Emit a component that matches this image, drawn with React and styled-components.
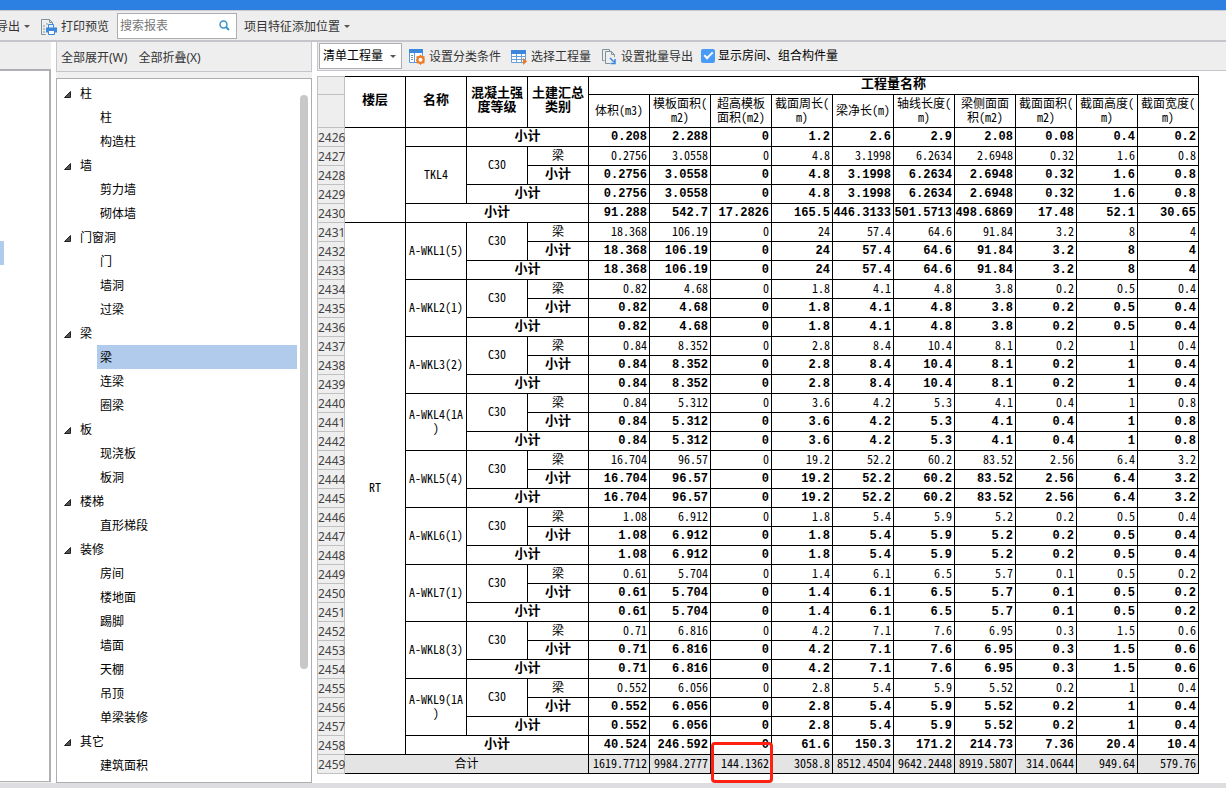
import React from "react";
import styled, { createGlobalStyle } from "styled-components";

const ui = `"Noto Sans", "Noto Sans CJK SC", sans-serif`;
const thin = `"Noto Sans CJK SC", monospace`;
const heavy = `"Liberation Mono", "Noto Sans CJK SC", monospace`;

const Global = createGlobalStyle`
  *, *::before, *::after { box-sizing: border-box; }
  body { margin: 0; background: #dedee0; font: 12px/16px ${ui}; color: #000; }
  button, input, select { font: inherit; color: inherit; }
`;

const Page = styled.div`
  min-height: 100vh;
  display: flex;
  flex-direction: column;
  padding-bottom: 5px;
  overflow: hidden;
`;
const TitleStrip = styled.div`
  height: 10px;
  background: #2b80e2;
`;
const TopBar = styled.header`
  display: flex;
  align-items: center;
  height: 32px;
  background: #eee;
  border-top: 1px solid #c8cad0;
  border-bottom: 2px solid #c4c6cc;
  color: #333;
`;
const ToolButton = styled.button`
  display: inline-flex;
  align-items: center;
  gap: 4px;
  padding: 2px 0 0;
  margin-left: ${(p) => p.$gap || 0}px;
  border: 0;
  background: none;
  white-space: nowrap;
  color: #333;
`;
const ExportButton = styled(ToolButton)`
  width: 30px;
  justify-content: flex-end;
`;
const Caret = styled.span`
  border: 3px solid transparent;
  border-top-color: #555;
  border-bottom: 0;
`;
const SearchBox = styled.label`
  display: flex;
  align-items: center;
  width: 120px;
  height: 26px;
  margin: 0 7px 0 8px;
  padding: 0 6px 0 2px;
  background: #fff;
  border: 1px solid #adadb2;
`;
const SearchInput = styled.input`
  flex: 1;
  min-width: 0;
  padding: 0;
  border: 0;
  outline: 0;
  background: none;
  &::placeholder { color: #777; opacity: 1; }
`;
const Body = styled.div`
  flex: 1;
  display: flex;
  align-items: stretch;
  background: #fff;
`;
const EdgePane = styled.aside`
  flex: none;
  width: 51px;
  padding-top: 27px;
  display: flex;
  background: #eee;
`;
const EdgeList = styled.div`
  flex: 1;
  padding-top: 170px;
  margin-bottom: 1px;
  background: #fff;
  border: solid #aeb0b4;
  border-width: 2px 2px 1px 0;
`;
const EdgeMark = styled.div`
  width: 4px;
  height: 24px;
  background: #b1cbec;
`;
const TreePane = styled.nav`
  flex: none;
  width: 256px;
  margin: 0 5px;
  display: flex;
  flex-direction: column;
  gap: 6px;
  background: #f0f0f0;
`;
const TreeTools = styled.div`
  display: flex;
  align-items: center;
  gap: 11px;
  height: 30px;
  padding-left: 4px;
  background: #eee;
  border: 1px solid #c4c6cc;
  border-top: 0;
`;
const TreeBox = styled.div`
  flex: 1;
  display: flex;
  justify-content: space-between;
  padding: 2px 3px 4px 5px;
  background: #fff;
  border: 1px solid #adadb2;
`;
const Tree = styled.ul`
  flex: 1;
  margin: 0;
  padding: 0;
  list-style: none;
`;
const Branch = styled.li`
  display: flex;
  align-items: center;
  gap: 9px;
  height: 24px;
  padding: 2px 0 0 2px;
`;
const Leaf = styled.li`
  height: 24px;
  margin: 0 3px 0 35px;
  padding-left: 3px;
  line-height: 26px;
  background: ${(p) => (p.$on ? "#b1cbec" : "none")};
`;
const Scroll = styled.div`
  width: 8px;
  height: 574px;
  margin-top: 14px;
  border-radius: 4px;
  background: #c8c8c8;
`;
const Report = styled.main`
  flex: 1;
  min-width: 0;
`;
const ReportTools = styled.div`
  display: flex;
  align-items: center;
  height: 29px;
  padding-left: 1px;
  background: #eee;
  border: solid #c4c6cc;
  border-width: 0 0 1px 1px;
`;
const SelectWrap = styled.label`
  position: relative;
  display: flex;
  align-items: center;
  width: 83px;
  height: 26px;
  background: #fff;
  border: 1px solid #adadb2;
`;
const Select = styled.select`
  appearance: none;
  width: 100%;
  padding: 0 14px 0 3px;
  border: 0;
  background: none;
`;
const SelectCaret = styled(Caret)`
  position: absolute;
  right: 5px;
`;
const CheckLabel = styled.label`
  display: flex;
  align-items: center;
  gap: 3px;
  margin-left: 8px;
  white-space: nowrap;
`;
const Check = styled.input`
  appearance: none;
  display: grid;
  place-items: center;
  width: 14px;
  height: 14px;
  margin: 0;
  border-radius: 2px;
  background: #4a9bf5;
  &:checked::after {
    content: "";
    width: 9px;
    height: 5px;
    margin-top: -3px;
    border: solid #fff;
    border-width: 0 0 2px 2px;
    transform: rotate(-45deg);
  }
`;
const Grid = styled.table`
  width: 882px;
  margin-top: 5px;
  table-layout: fixed;
  border-collapse: separate;
  border-spacing: 0;
  font: 12px/14px ${thin};
`;
const NumCol = styled.col`
  width: 28px;
`;
const RowNo = styled.th`
  height: 19px;
  padding: 2px 0 0;
  border: solid #c0c0c0;
  border-width: ${(p) => (p.$top ? "1px 1px 1px 1px" : "0 1px 1px 1px")};
  background: #eee;
  color: #444;
  font: 12px/14px "Noto Sans", sans-serif;
  white-space: nowrap;
`;
const HeadCell = styled.th`
  height: ${(p) => (p.$tall ? 33 : 19)}px;
  padding: 0 0 2px;
  border: solid #000;
  border-width: ${(p) => (p.$tall ? "0 1px 1px 0" : "1px 1px 1px 0")};
  font: ${(p) => (p.$tall ? `12px/14px ${thin}` : `bold 13px/14px ${heavy}`)};
  white-space: pre;
`;
const Unit = styled.span`
  font-feature-settings: "hwid";
`;
const Cell = styled.td`
  position: relative;
  height: 19px;
  padding: 0 0 ${(p) => (p.$bold ? 0 : 3)}px;
  border: solid #000;
  border-width: 0 1px 1px 0;
  text-align: center;
  white-space: pre;
  background: ${(p) => (p.$total ? "#e4e4e4" : "#fff")};
  font: ${(p) => (p.$bold ? `bold 13px/14px ${heavy}` : "inherit")};
  font-feature-settings: ${(p) => (p.$bold ? "normal" : '"hwid"')};
`;
const Value = styled(Cell)`
  padding-right: 2px;
  text-align: right;
  font: ${(p) => (p.$bold ? `bold 12px/14px ${heavy}` : "inherit")};
  font-feature-settings: ${(p) => (p.$bold ? "normal" : '"hwid"')};
`;
const RedMark = styled.span`
  position: absolute;
  z-index: 1;
  inset: -13px -2px -10px 0;
  border: 3px solid #ff2012;
  border-radius: 4px;
`;

const tree = [
  ["柱", ["柱", "构造柱"]],
  ["墙", ["剪力墙", "砌体墙"]],
  ["门窗洞", ["门", "墙洞", "过梁"]],
  ["梁", ["梁", "连梁", "圈梁"]],
  ["板", ["现浇板", "板洞"]],
  ["楼梯", ["直形梯段"]],
  ["装修", ["房间", "楼地面", "踢脚", "墙面", "天棚", "吊顶", "单梁装修"]],
  ["其它", ["建筑面积"]],
];

const heads = [
  ["体积", "(m3)"],
  ["模板面积", "(\nm2)"],
  ["超高模板\n面积", "(m2)"],
  ["截面周长", "(\nm)"],
  ["梁净长", "(m)"],
  ["轴线长度", "(\nm)"],
  ["梁侧面面\n积", "(m2)"],
  ["截面面积", "(\nm2)"],
  ["截面高度", "(\nm)"],
  ["截面宽度", "(\nm)"],
];

const beams = [
  ["TKL4", "0.2756 3.0558 0 4.8 3.1998 6.2634 2.6948 0.32 1.6 0.8"],
  ["A-WKL1(5)", "18.368 106.19 0 24 57.4 64.6 91.84 3.2 8 4"],
  ["A-WKL2(1)", "0.82 4.68 0 1.8 4.1 4.8 3.8 0.2 0.5 0.4"],
  ["A-WKL3(2)", "0.84 8.352 0 2.8 8.4 10.4 8.1 0.2 1 0.4"],
  ["A-WKL4(1A\n)", "0.84 5.312 0 3.6 4.2 5.3 4.1 0.4 1 0.8"],
  ["A-WKL5(4)", "16.704 96.57 0 19.2 52.2 60.2 83.52 2.56 6.4 3.2"],
  ["A-WKL6(1)", "1.08 6.912 0 1.8 5.4 5.9 5.2 0.2 0.5 0.4"],
  ["A-WKL7(1)", "0.61 5.704 0 1.4 6.1 6.5 5.7 0.1 0.5 0.2"],
  ["A-WKL8(3)", "0.71 6.816 0 4.2 7.1 7.6 6.95 0.3 1.5 0.6"],
  ["A-WKL9(1A\n)", "0.552 6.056 0 2.8 5.4 5.9 5.52 0.2 1 0.4"],
];

const Values = ({ list, ...rest }) =>
  list.split(" ").map((v, i) => (
    <Value key={i} {...rest}>
      {v}
    </Value>
  ));

function BeamRows({ start, name, list, floor }) {
  return (
    <>
      <tr>
        <RowNo scope="row">{start}</RowNo>
        {floor}
        <Cell rowSpan={3}>{name}</Cell>
        <Cell rowSpan={2}>C30</Cell>
        <Cell>梁</Cell>
        <Values list={list} />
      </tr>
      <tr>
        <RowNo scope="row">{start + 1}</RowNo>
        <Cell $bold>小计</Cell>
        <Values list={list} $bold />
      </tr>
      <tr>
        <RowNo scope="row">{start + 2}</RowNo>
        <Cell $bold colSpan={2}>小计</Cell>
        <Values list={list} $bold />
      </tr>
    </>
  );
}

const FloorTotal = ({ no, list }) => (
  <tr>
    <RowNo scope="row">{no}</RowNo>
    <Cell $bold colSpan={3}>小计</Cell>
    <Values list={list} $bold />
  </tr>
);

const PrintIcon = () => (
  <svg width="16" height="16" viewBox="0 0 16 16" fill="none">
    <path d="M4.500 15.500H.5V.5H8.500L11.500 3.500V5M8.500 .5V3.500H11.500" stroke="#7f929c" />
    <path d="M2 7h2M2 10h2M2 13h2M5 5h2" stroke="#7f929c" />
    <path d="M7.500 9V5.500H12.500V9" stroke="#3b87dc" />
    <path d="M5 8.500h11v5h-2v-2H7v2H5z" fill="#3b87dc" />
    <path d="M7.500 11.500h6v4h-6z" fill="#fff" stroke="#3b87dc" />
  </svg>
);
const SearchIcon = () => (
  <svg width="11" height="11" viewBox="0 0 11 11" fill="none" stroke="#3c93c8">
    <circle cx="4.500" cy="4.500" r="3.500" strokeWidth="1.500" />
    <path d="M7 7l3 3" strokeWidth="2" />
  </svg>
);
const SortIcon = () => (
  <svg width="16" height="16" viewBox="0 0 16 16" fill="none">
    <path d="M.5 .5h13v13H.5z" fill="#fff" stroke="#5a9ae0" />
    <path d="M0 0h14v4H0z" fill="#3b87dc" />
    <path d="M5.500 4v9" stroke="#5a9ae0" />
    <path d="M2 6.500h2M2 8.500h2M2 10.500h2" stroke="#7f929c" />
    <path d="M11.500 5.500l1.500 1.500 2.500.2v2.800l.5 1-.5 1v2.300l-2.500.2-1.500 1.500-1.500-1.500-2.500-.2v-2.300l-.8-1 .8-1V7.200l2.500-.2z" fill="#ef7a24" />
    <circle cx="11.500" cy="10.800" r="2" fill="#fff" />
  </svg>
);
const TableIcon = () => (
  <svg width="16" height="16" viewBox="0 0 16 16" fill="none">
    <path d="M.5 1.500h14v12H.5zM5.500 4v10M10.500 4v10M0 7.500h15M0 10.500h15" fill="#fff" stroke="#6a9fd8" />
    <path d="M0 1h15v4H0z" fill="#3b87dc" />
    <path d="M12 9v7l4-3.500z" fill="#ef7a24" />
  </svg>
);
const CopyIcon = () => (
  <svg width="15" height="16" viewBox="0 0 15 16" fill="none">
    <path d="M2.500 11.500H.5V.5H7.500V2" stroke="#7f929c" />
    <path d="M8 14.500H3.500V2.500H9.500L12.500 5.500V8M9.500 2.500V5.500H12.500" stroke="#7f929c" />
    <path d="M8 9l4 4M13 10v4.500H8.500" stroke="#3b87dc" strokeWidth="1.500" />
  </svg>
);
const Expander = () => (
  <svg width="7" height="7" viewBox="0 0 7 7">
    <path d="M6.500 .5v6h-6z" fill="#555" stroke="#222" />
  </svg>
);

export default function App() {
  return (
    <Page>
      <Global />
      <TitleStrip />
      <TopBar>
        <ExportButton>导出 <Caret /></ExportButton>
        <ToolButton $gap={11}><PrintIcon />打印预览</ToolButton>
        <SearchBox>
          <SearchInput aria-label="搜索报表" placeholder="搜索报表" />
          <SearchIcon />
        </SearchBox>
        <ToolButton>项目特征添加位置 <Caret /></ToolButton>
      </TopBar>
      <Body>
        <EdgePane>
          <EdgeList><EdgeMark /></EdgeList>
        </EdgePane>
        <TreePane>
          <TreeTools>
            <ToolButton>全部展开(W)</ToolButton>
            <ToolButton>全部折叠(X)</ToolButton>
          </TreeTools>
          <TreeBox>
            <Tree>
              {tree.map(([name, kids]) => (
                <React.Fragment key={name}>
                  <Branch><Expander />{name}</Branch>
                  {kids.map((k) => (
                    <Leaf key={k} $on={name === "梁" && k === "梁"}>{k}</Leaf>
                  ))}
                </React.Fragment>
              ))}
            </Tree>
            <Scroll />
          </TreeBox>
        </TreePane>
        <Report>
          <ReportTools>
            <SelectWrap>
              <Select aria-label="工程量类型"><option>清单工程量</option></Select>
              <SelectCaret />
            </SelectWrap>
            <ToolButton $gap={7}><SortIcon />设置分类条件</ToolButton>
            <ToolButton $gap={10}><TableIcon />选择工程量</ToolButton>
            <ToolButton $gap={11}><CopyIcon />设置批量导出</ToolButton>
            <CheckLabel>
              <Check type="checkbox" defaultChecked />
              显示房间、组合构件量
            </CheckLabel>
          </ReportTools>
          <Grid>
            <colgroup>
              <NumCol />
              <col span={14} />
            </colgroup>
            <thead>
              <tr>
                <RowNo as="td" $top />
                <HeadCell rowSpan={2}>楼层</HeadCell>
                <HeadCell rowSpan={2}>名称</HeadCell>
                <HeadCell rowSpan={2}>{"混凝土强\n度等级"}</HeadCell>
                <HeadCell rowSpan={2}>{"土建汇总\n类别"}</HeadCell>
                <HeadCell colSpan={10}>工程量名称</HeadCell>
              </tr>
              <tr>
                <RowNo as="td" />
                {heads.map(([text, unit]) => (
                  <HeadCell key={text} $tall>{text}<Unit>{unit}</Unit></HeadCell>
                ))}
              </tr>
            </thead>
            <tbody>
              <tr>
                <RowNo scope="row">2426</RowNo>
                <Cell rowSpan={5} />
                <Cell />
                <Cell $bold colSpan={2}>小计</Cell>
                <Values list="0.208 2.288 0 1.2 2.6 2.9 2.08 0.08 0.4 0.2" $bold />
              </tr>
              <BeamRows start={2427} name={beams[0][0]} list={beams[0][1]} />
              <FloorTotal no={2430} list="91.288 542.7 17.2826 165.5 446.3133 501.5713 498.6869 17.48 52.1 30.65" />
              {beams.slice(1).map(([name, list], i) => (
                <BeamRows
                  key={name}
                  start={2431 + i * 3}
                  name={name}
                  list={list}
                  floor={i === 0 && <Cell rowSpan={28}>RT</Cell>}
                />
              ))}
              <FloorTotal no={2458} list="40.524 246.592 0 61.6 150.3 171.2 214.73 7.36 20.4 10.4" />
              <tr>
                <RowNo scope="row">2459</RowNo>
                <Cell $total colSpan={4}>合计</Cell>
                {"1619.7712 9984.2777 144.1362 3058.8 8512.4504 9642.2448 8919.5807 314.0644 949.64 579.76"
                  .split(" ")
                  .map((v, i) => (
                    <Value key={i} $total>{v}{i === 2 && <RedMark />}</Value>
                  ))}
              </tr>
            </tbody>
          </Grid>
        </Report>
      </Body>
    </Page>
  );
}
